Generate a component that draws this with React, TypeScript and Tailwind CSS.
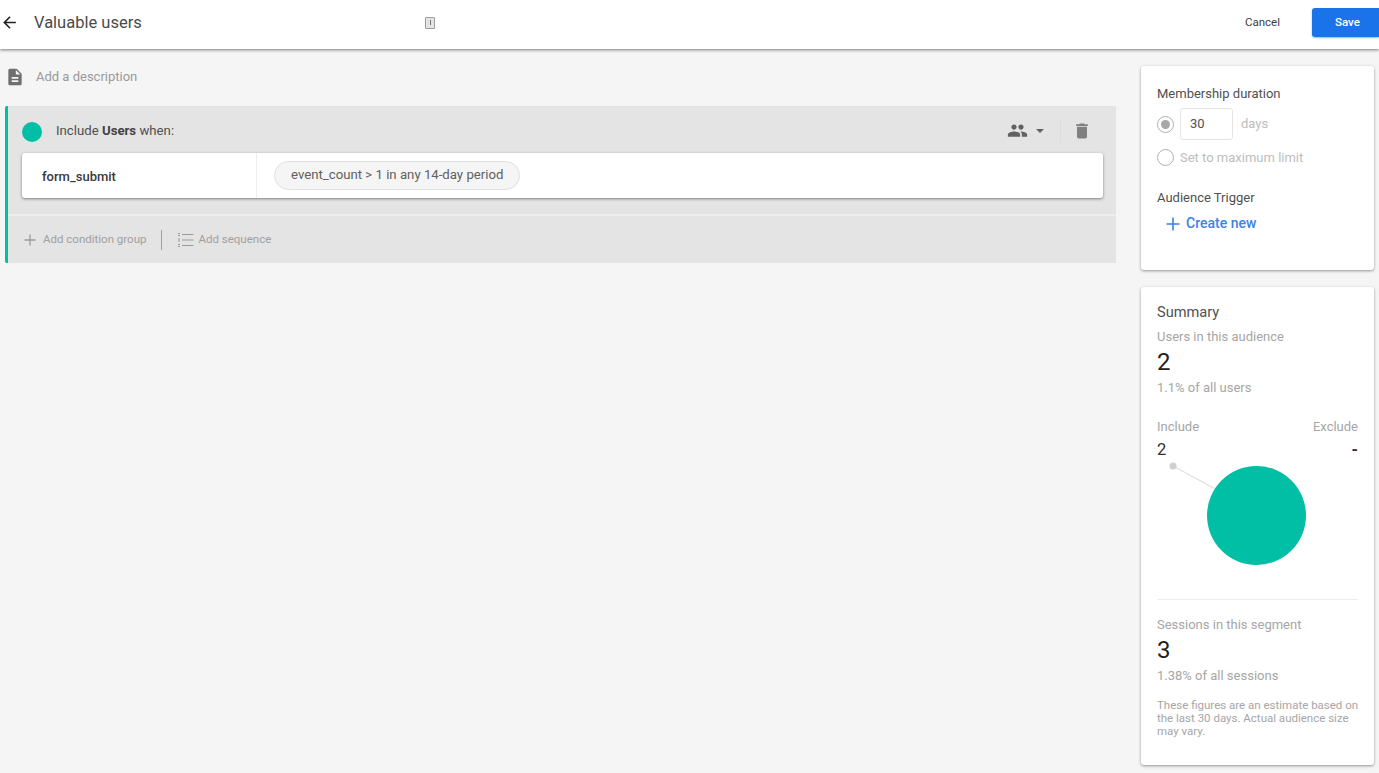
import React from "react";

const roboto = "font-['Roboto','Liberation_Sans',sans-serif]";

const App = () => {
  return (
    <div className={`${roboto} w-[1379px] h-[773px] overflow-hidden bg-[#f5f5f5] flex flex-col`}>
      {/* top bar */}
      <header className="h-[49px] shrink-0 bg-white shadow-[0_1px_3px_rgba(0,0,0,0.5)] z-10 flex items-center pb-[4px] relative">
        <svg className="w-[19px] h-[19px]" viewBox="0 0 24 24" fill="#202124">
          <path d="M20 11H7.83l5.59-5.59L12 4l-8 8 8 8 1.41-1.41L7.83 13H20v-2z" />
        </svg>
        <div className="ml-[15px] mt-[1px] text-[16.5px] text-[#4a4a4a] w-[376px]">Valuable users</div>
        <div className="w-[10px] h-[12px] ml-[15px] border border-[#9e9e9e] bg-[#e4e4e4] rounded-[1px] flex items-center justify-center">
          <div className="w-[1px] h-[5px] bg-[#777]" />
        </div>
        <div className="ml-auto flex items-center">
          <span className="text-[11.5px] text-[#3c4043] mr-[32px]">Cancel</span>
          <div className="w-[67px] h-[29px] bg-[#1a73e8] rounded-l-[3px] shadow-[0_1px_2px_rgba(0,0,0,0.3)] text-white text-[11.5px] font-medium flex items-center pl-[23px]">
            Save
          </div>
        </div>
      </header>

      <div className="flex flex-1 min-h-0">
        {/* builder column */}
        <main className="w-[1141px] shrink-0 pl-[5px] pr-[25px]">
          <div className="h-[55px] mb-[2px] flex items-center">
            <svg className="w-[20px] h-[20px]" viewBox="0 0 24 24" fill="#6f6f6f">
              <path d="M14 2H6c-1.1 0-2 .9-2 2v16c0 1.1.9 2 2 2h12c1.100 0 2-.9 2-2V8l-6-6zm2 16H8v-2h8v2zm0-4H8v-2h8v2zm-3-5V3.500L18.500 9H13z" />
            </svg>
            <span className="ml-[11px] text-[13px] text-[#9a9a9a]">Add a description</span>
          </div>

          <section className="bg-[#e4e4e4] border-l-[3px] border-[#00bfa5] rounded-l-[2px] h-[157px] flex flex-col">
            <div className="h-[47px] shrink-0 flex items-center pt-[4px] pl-[14px] pr-[24px]">
              <div className="w-[20px] h-[20px] rounded-full bg-[#00bfa5]" />
              <span className="ml-[14px] text-[13.2px] text-[#505050] -mt-[1px]">
                Include <b className="font-bold text-[#424242]">Users</b> when:
              </span>
              <div className="ml-auto flex items-center -mt-[2px]">
                <svg className="w-[21px] h-[21px]" viewBox="0 0 24 24" fill="#616161">
                  <path d="M16 11c1.660 0 2.990-1.340 2.990-3S17.660 5 16 5c-1.660 0-3 1.340-3 3s1.340 3 3 3zm-8 0c1.660 0 2.990-1.340 2.990-3S9.660 5 8 5C6.340 5 5 6.340 5 8s1.340 3 3 3zm0 2c-2.330 0-7 1.170-7 3.500V19h14v-2.500c0-2.330-4.670-3.500-7-3.500zm8 0c-.29 0-.62.02-.97.050 1.160.84 1.970 1.970 1.970 3.450V19h6v-2.500c0-2.330-4.670-3.500-7-3.500z" />
                </svg>
                <div className="ml-[8px] w-0 h-0 border-x-[4px] border-x-transparent border-t-[4px] border-t-[#616161]" />
                <div className="ml-[16px] w-[1px] h-[24px] bg-[#dcdcdc]" />
                <svg className="ml-[11px] w-[20px] h-[20px]" viewBox="0 0 24 24" fill="#808080">
                  <path d="M6 19c0 1.100.9 2 2 2h8c1.100 0 2-.9 2-2V7H6v12zM19 4h-3.500l-1-1h-5l-1 1H5v2h14V4z" />
                </svg>
              </div>
            </div>

            <div className="ml-[14px] mr-[13px] h-[45px] shrink-0 bg-white rounded-[3px] shadow-[0_1px_3px_rgba(0,0,0,0.45)] flex">
              <div className="w-[235px] border-r border-[#eeeeee] pl-[20px] pt-[3px] flex items-center text-[13px] font-medium text-[#3a3a3a]">
                form_submit
              </div>
              <div className="pl-[17px] flex items-center">
                <div className="h-[29px] pl-[16px] pr-[16px] pb-[2px] rounded-full bg-[#f5f5f5] border border-[#e0e0e0] text-[13.2px] text-[#5f5f5f] flex items-center">
                  event_count &gt; 1 in any 14-day period
                </div>
              </div>
            </div>

            <div className="mt-[16px] h-[2px] shrink-0 bg-[#eeeeee]" />

            <div className="flex-1 flex items-center pl-[15px] text-[11.5px] text-[#a0a0a0]">
              <svg className="w-[14px] h-[14px]" viewBox="0 0 14 14" stroke="#9a9a9a" strokeWidth="1.300" fill="none">
                <path d="M7 1.500v11M1.500 7h11" />
              </svg>
              <span className="ml-[6px]">Add condition group</span>
              <div className="ml-[15px] w-[1px] h-[20px] bg-[#9e9e9e]" />
              <svg className="ml-[15px] w-[17px] h-[16px]" viewBox="0 0 17 16" stroke="#9a9a9a" strokeWidth="1.200" fill="none">
                <path d="M5 2.500h11.500M5 8h11.500M5 13.500h11.500" />
                <path d="M1 1.500h2M1 3.500h2M1 7h2M1 9h2M1 12.500h2M1 14.500h2" strokeWidth="1" />
              </svg>
              <span className="ml-[4px]">Add sequence</span>
            </div>
          </section>
        </main>

        {/* side cards */}
        <aside className="w-[233px] shrink-0 pt-[17px] flex flex-col gap-[17px]">
          <div className="h-[204px] bg-white rounded-[3px] shadow-[0_1px_3px_rgba(0,0,0,0.4)] px-[16px] pt-[20px]">
            <div className="text-[13px] leading-[15px] text-[#505050]">Membership duration</div>
            <div className="mt-[7px] flex items-center h-[32px]">
              <div className="w-[17px] h-[17px] rounded-full border border-[#b0b0b0] flex items-center justify-center">
                <div className="w-[9px] h-[9px] rounded-full bg-[#a8a8a8]" />
              </div>
              <div className="ml-[6px] w-[53px] h-[32px] border border-[#e4e4e4] rounded-[3px] pl-[9px] flex items-center text-[13px] text-[#505050]">
                30
              </div>
              <span className="ml-[8px] text-[13px] text-[#bdbdbd]">days</span>
            </div>
            <div className="mt-[9px] flex items-center h-[17px]">
              <div className="w-[17px] h-[17px] rounded-full border border-[#b0b0b0]" />
              <span className="ml-[6px] text-[13px] text-[#bdbdbd]">Set to maximum limit</span>
            </div>
            <div className="mt-[24px] text-[13px] leading-[15px] text-[#505050]">Audience Trigger</div>
            <div className="mt-[8px] ml-[9px] flex items-center text-[14px] font-medium text-[#3b82e6]">
              <svg className="w-[14px] h-[14px]" viewBox="0 0 14 14" stroke="#3b82e6" strokeWidth="1.600" fill="none">
                <path d="M7 0.500v13M0.500 7h13" />
              </svg>
              <span className="ml-[6px]">Create new</span>
            </div>
          </div>

          <div className="h-[478px] bg-white rounded-[3px] shadow-[0_1px_3px_rgba(0,0,0,0.4)] px-[16px] pt-[16px]">
            <div className="text-[14.6px] leading-[18px] text-[#505050]">Summary</div>
            <div className="mt-[8px] text-[13px] leading-[15px] text-[#a6a6a6]">Users in this audience</div>
            <div className="mt-[4px] text-[24px] leading-[28px] text-[#212121]">2</div>
            <div className="mt-[4px] text-[13px] leading-[15px] text-[#a6a6a6]">1.1% of all users</div>
            <div className="mt-[24px] flex justify-between text-[13px] leading-[15px] text-[#a6a6a6]">
              <span>Include</span>
              <span>Exclude</span>
            </div>
            <div className="mt-[7px] flex justify-between text-[16.5px] leading-[18px] text-[#303030]">
              <span>2</span>
              <span className="font-bold">-</span>
            </div>
            <div className="relative h-[140px]">
              <svg className="absolute left-0 top-0 w-[80px] h-[60px]" viewBox="0 0 80 60">
                <line x1="16" y1="7" x2="64" y2="33" stroke="#e0e0e0" strokeWidth="1.200" />
                <circle cx="16" cy="7" r="3.500" fill="#cfcfcf" />
              </svg>
              <div className="absolute left-[50px] top-[7px] w-[99px] h-[99px] rounded-full bg-[#00bfa5]" />
            </div>
            <div className="h-[1px] bg-[#eeeeee]" />
            <div className="mt-[17px] text-[13px] leading-[15px] text-[#a6a6a6]">Sessions in this segment</div>
            <div className="mt-[4px] text-[24px] leading-[28px] text-[#212121]">3</div>
            <div className="mt-[4px] text-[13px] leading-[15px] text-[#a6a6a6]">1.38% of all sessions</div>
            <div className="mt-[16px] -mr-[6px] text-[11.5px] leading-[13px] text-[#a6a6a6]">
              These figures are an estimate based on the last 30 days. Actual audience size may vary.
            </div>
          </div>
        </aside>
      </div>
    </div>
  );
};

export default App;
